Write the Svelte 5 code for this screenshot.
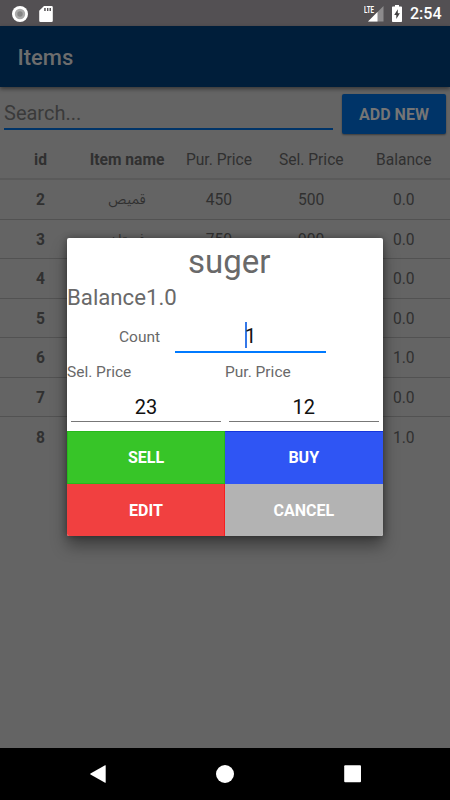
<script lang="ts">
  type Item = {
    id: number;
    name?: string;
    purchase?: number;
    selling?: number;
    balance: string;
  };

  const items: Item[] = [
    { id: 2, name: 'قميص', purchase: 450, selling: 500, balance: '0.0' },
    { id: 3, name: 'فستان', purchase: 750, selling: 900, balance: '0.0' },
    { id: 4, balance: '0.0' },
    { id: 5, balance: '0.0' },
    { id: 6, balance: '1.0' },
    { id: 7, balance: '0.0' },
    { id: 8, balance: '1.0' },
  ];
</script>

<div class="screen">
  <div class="status-bar">
    <svg class="record" viewBox="0 0 16 16" width="16" height="16">
      <circle cx="8" cy="8" r="8" fill="#fff" />
      <circle cx="8" cy="8" r="5.2" fill="#aaa" />
      <circle cx="8" cy="8" r="2.7" fill="#858585" />
    </svg>
    <svg viewBox="0 0 14 16" width="14" height="16">
      <path d="M5 0h7.5A1.3 1.3 0 0 1 13.8 1.3v13.4a1.3 1.3 0 0 1-1.3 1.3h-11A1.3 1.3 0 0 1 .2 14.7V4.8z" fill="#fff" />
      <path d="M5.2 2h1.5v3H5.2zM8 2h1.4v3H8zM10.5 2H12v3h-1.5z" fill="#535053" />
    </svg>
    <span class="spacer"></span>
    <svg class="signal" viewBox="0 0 20 17" width="20" height="17">
      <path d="M19.5 1v15.5H4z" fill="#8d8b8d" />
      <path d="M13.5 7v9.5H4z" fill="#fff" />
      <text x="0" y="8.2" textLength="10" lengthAdjust="spacingAndGlyphs">LTE</text>
    </svg>
    <svg class="battery" viewBox="0 0 10 17" width="10" height="17">
      <path d="M3 0h4v1.5h2.2a.8.8 0 0 1 .8.8v13.9a.8.8 0 0 1-.8.8H.8a.8.8 0 0 1-.8-.8V2.3a.8.8 0 0 1 .8-.8H3z" fill="#fff" />
      <path d="M5.8 4.2 2.2 10h2.1v4L7.9 8.3H5.8z" fill="#424042" />
    </svg>
    <span class="clock">2:54</span>
  </div>

  <header>Items</header>

  <main>
    <div class="toolbar">
      <div class="search">Search...</div>
      <button class="add">ADD NEW</button>
    </div>
    <div class="row heading">
      <b>id</b>
      <b>Item name</b>
      <span>Pur. Price</span>
      <span>Sel. Price</span>
      <span>Balance</span>
    </div>
    {#each items as item (item.id)}
      <div class="row">
        <b>{item.id}</b>
        <span class="name" dir="rtl">{item.name ?? ''}</span>
        <span>{item.purchase ?? ''}</span>
        <span>{item.selling ?? ''}</span>
        <span>{item.balance}</span>
      </div>
    {/each}
  </main>

  <nav>
    <svg viewBox="0 0 18 18" width="18" height="18">
      <path d="M16.7.6v16.8q0 .6-.6.3L1.5 9.5q-.7-.5 0-1L16.1.3q.6-.3.6.3z" />
    </svg>
    <svg viewBox="0 0 18 18" width="18" height="18"><circle cx="9" cy="9" r="9" /></svg>
    <svg viewBox="0 0 18 18" width="18" height="18"><rect x="1.2" y=".3" width="16.8" height="17" rx="1" /></svg>
  </nav>

  <div class="dialog" role="dialog" aria-label="suger">
    <h2>suger</h2>
    <div class="balance">Balance1.0</div>
    <div class="count">
      <span>Count</span>
      <div class="field focused"><i class="caret"></i>1</div>
    </div>
    <div class="prices">
      <div>
        <span>Sel. Price</span>
        <div class="field">23</div>
      </div>
      <div>
        <span>Pur. Price</span>
        <div class="field">12</div>
      </div>
    </div>
    <div class="actions">
      <button class="sell">SELL</button>
      <button class="buy">BUY</button>
      <button class="edit">EDIT</button>
      <button class="cancel">CANCEL</button>
    </div>
  </div>
</div>

<style>
  :global(body) {
    margin: 0;
  }

  .screen {
    position: relative;
    display: flex;
    flex-direction: column;
    width: 450px;
    height: 800px;
    overflow: hidden;
    background: #646464;
    font-family: Roboto, 'Noto Sans', 'DejaVu Sans', sans-serif;
  }

  .status-bar {
    display: flex;
    flex-shrink: 0;
    align-items: center;
    box-sizing: border-box;
    height: 26px;
    padding: 1px 8.5px 0 12px;
    background: #535053;
    color: #fff;
  }

  .record {
    margin-right: 11px;
  }

  .spacer {
    flex: 1;
  }

  .signal {
    margin-right: 8px;

    & text {
      fill: #fff;
      font-size: 9.5px;
      font-weight: 700;
    }
  }

  .battery {
    margin: 0 8px 1px 0;
  }

  .clock {
    padding-top: 1px;
    font-size: 16px;
    font-weight: 500;
    line-height: 24px;
  }

  header {
    z-index: 1;
    display: flex;
    flex-shrink: 0;
    align-items: center;
    box-sizing: border-box;
    height: 61px;
    padding: 2px 17.5px 0;
    background: #001e3a;
    box-shadow: 0 2px 4px rgba(0, 0, 0, 0.45);
    color: #6d6d6d;
    font-size: 22px;
    font-weight: 500;
  }

  main {
    flex: 1;
  }

  .toolbar {
    display: flex;
    align-items: flex-start;
    gap: 9px;
    height: 46px;
    padding: 7px 4px 0;
  }

  .search {
    flex: 1;
    height: 34px;
    border-bottom: 2px solid #003468;
    color: #3a3a3a;
    font-size: 20px;
    line-height: 39px;
  }

  button {
    padding: 0;
    border: none;
    font-family: inherit;
    font-weight: 700;
  }

  .add {
    width: 104px;
    height: 40px;
    border-radius: 2px;
    background: #003468;
    box-shadow: 0 1px 2px rgba(0, 0, 0, 0.4);
    color: #757575;
    font-size: 16px;
  }

  .row {
    display: grid;
    grid-template-columns: 81px 92px 92px 92.5px 92.5px;
    align-items: center;
    box-sizing: border-box;
    height: 39.5px;
    padding-top: 1.5px;
    border-bottom: 1px solid #525252;
    color: #303030;
    font-size: 15.6px;
    text-align: center;

    &:last-child {
      border-bottom: none;
    }

    & b {
      font-weight: 700;
    }
  }

  .heading {
    height: 40px;
    padding-top: 2px;
    border-bottom-width: 2px;
    border-color: #5a5a5a;
  }

  .name {
    font-family: 'Noto Sans Arabic', 'DejaVu Sans', sans-serif;
    font-size: 13.5px;
    line-height: 20px;
  }

  nav {
    display: flex;
    flex-shrink: 0;
    justify-content: space-between;
    align-items: center;
    box-sizing: border-box;
    height: 52px;
    padding: 0 89px;
    background: #000;
    fill: #fff;
  }

  .dialog {
    position: absolute;
    z-index: 2;
    top: 238px;
    left: 67px;
    width: 315.5px;
    height: 298px;
    overflow: hidden;
    border-radius: 2px;
    background: #fff;
    box-shadow: 0 10px 16px rgba(0, 0, 0, 0.38), 0 0 7px rgba(0, 0, 0, 0.35);
    color: #696969;
    font-size: 15.5px;
  }

  h2 {
    height: 45px;
    margin: 0;
    padding-left: 9px;
    font-size: 33px;
    font-weight: 400;
    line-height: 48px;
    text-align: center;
  }

  .balance {
    height: 30px;
    font-size: 22.2px;
    line-height: 29px;
  }

  .count {
    display: flex;
    align-items: center;
    gap: 15px;
    height: 48px;
    padding-left: 52px;

    & .field {
      width: 151px;
      height: 33px;
      margin: 0 0 3px;
      line-height: 37px;
    }
  }

  .field {
    height: 31px;
    margin: 0 4px;
    border-bottom: 1px solid #777;
    color: #111;
    font-size: 20px;
    line-height: 32px;
    text-align: center;
  }

  .focused {
    border-bottom: 2px solid #007aff;
  }

  .caret {
    display: inline-block;
    width: 2px;
    height: 26px;
    margin-right: -2px;
    background: #3478e8;
    vertical-align: -5px;
  }

  .prices {
    display: grid;
    grid-template-columns: 158px 157.5px;
    height: 70px;

    & span {
      display: block;
      height: 29px;
      line-height: 23px;
    }

    & .field {
      line-height: 34px;
    }
  }

  .actions {
    display: grid;
    grid-template-rows: 52.5px 52.5px;
    grid-template-columns: 158px 157.5px;

    & button {
      padding-top: 1px;
      color: #fff;
      font-size: 16px;
    }
  }

  .sell {
    background: #37c528;
    box-shadow: inset 0 0 0 1px #27b91b;
  }

  .buy {
    background: #2f55f4;
    box-shadow: inset 0 1px #1535db;
  }

  .edit {
    background: #f14040;
    box-shadow: inset -1px 0 #f71d20;
  }

  .cancel {
    background: #b3b3b3;
  }
</style>
